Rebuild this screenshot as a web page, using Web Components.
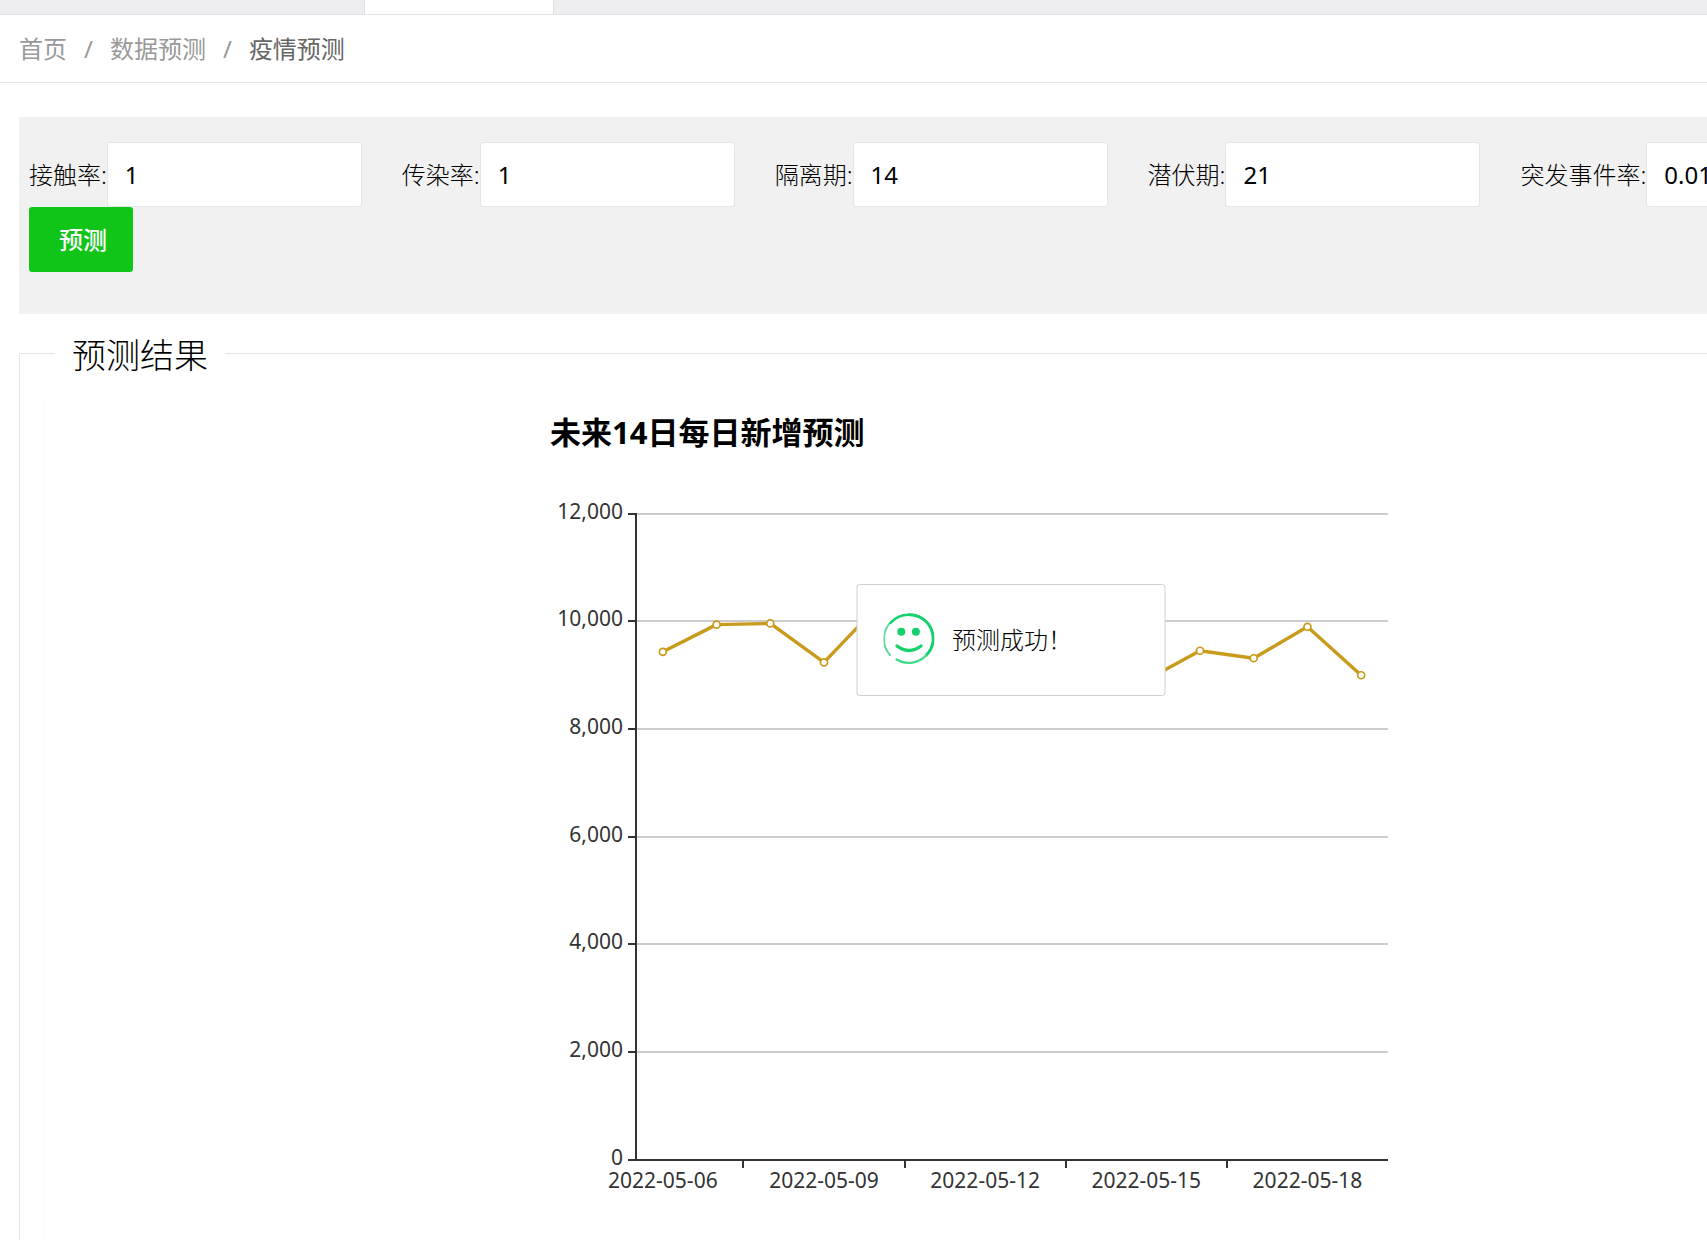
<!DOCTYPE html>
<html lang="zh-CN">
<head>
<meta charset="utf-8">
<title>疫情预测</title>
<style>
html,body{margin:0;padding:0;background:#fff;overflow:hidden}
body{font:24px/34px "Noto Sans","Noto Sans CJK SC",sans-serif;color:#000}
</style>
</head>
<body>
<forecast-page></forecast-page>
<script>
const define=(name,html,setup)=>{
  const t=document.createElement('template');t.innerHTML=html;
  customElements.define(name,class extends HTMLElement{
    connectedCallback(){
      if(this.shadowRoot)return;
      const root=this.attachShadow({mode:'open'});
      root.append(t.content.cloneNode(true));
      if(setup)setup(this,root);
    }
  });
};

define('tab-strip',`
<style>
:host{display:flex;height:14px;background:#eeeef0;border-bottom:1px solid #e2e2e4;padding-left:364px}
.tab{width:188px;background:#fff;border:solid #e2e2e4;border-width:0 1px}
</style><div class="tab"></div>`);

define('bread-crumb',`
<style>
:host{display:block;border-bottom:1px solid #e6e6e6;padding:17px 19px 16px}
nav{display:flex;gap:17px;color:#999}
a{color:inherit;text-decoration:none}
.now{color:#666}
</style>
<nav><a href="#home">首页</a><span>/</span><a href="#data">数据预测</a><span>/</span><a class="now" href="#forecast">疫情预测</a></nav>`);

define('form-field',`
<style>
:host{display:flex;align-items:center}
label{white-space:nowrap;font-weight:300}
input{box-sizing:border-box;width:255px;height:65px;padding:0 17px;border:1px solid #e6e6e6;border-radius:3px;background:#fff;color:#000;font:inherit;outline:0}
</style><label for="v"></label><input id="v" type="text">`,(el,root)=>{
  root.querySelector('label').textContent=el.getAttribute('label')+':';
  root.querySelector('input').value=el.getAttribute('value');
});

define('action-button',`
<style>
:host{display:block}
button{display:block;height:65px;padding:0 26px 0 30px;border:0;border-radius:3px;background:#10c418;color:#fff;font:inherit;font-weight:500}
</style><button type="button"><slot></slot></button>`);

define('query-panel',`
<style>
:host{display:flex;flex-wrap:wrap;column-gap:40px;background:#f1f1f1;padding:25px 10px 42px}
</style><slot></slot>`);

define('result-box',`
<style>
:host{display:block}
fieldset{margin:0;border:1px solid #e6e6e6;border-bottom:0;padding:0 25px;min-width:0}
legend{margin-left:10px;padding:4px 17px 0;font-size:34px;line-height:46px;font-weight:300}
.card{margin-top:17px;padding:17px 0;box-shadow:0 1px 2px rgba(0,0,0,.05);display:flex;justify-content:center}
</style>
<fieldset><legend>预测结果</legend><div class="card"><slot></slot></div></fieldset>`);

define('trend-chart',`
<style>
:host{display:block}
svg{display:block;overflow:visible}
.title{font-size:31px;font-weight:700;fill:#000}
.lab{font-size:21px;fill:#333}
.grid{stroke:#ccc;stroke-width:2}
.axis{stroke:#333;stroke-width:2}
.line{fill:none;stroke:#c99b1c;stroke-width:3.4;stroke-linejoin:bevel}
.dot{fill:#fff;stroke:#c99b1c;stroke-width:1.7}
</style><svg width="940" height="850" viewBox="0 0 940 850" role="img"></svg>`,(el,root)=>{
  const svg=root.querySelector('svg');
  const L=95,R=847,T=102,B=748,max=12000;
  const data=[9440,9945,9967,9243,10290,9800,9500,9200,8700,8915,9460,9320,9905,9005];
  const y=v=>B-(B-T)*v/max, band=(R-L)/data.length, x=i=>L+band*(i+.5);
  let s='<text class="title" x="9" y="32">未来14日每日新增预测</text>';
  for(let v=0;v<=max;v+=2000){
    const gy=Math.floor(y(v));
    if(v)s+=`<line class="grid" x1="${L}" x2="${R}" y1="${gy}" y2="${gy}"/>`;
    s+=`<line class="axis" x1="87" x2="${L}" y1="${gy}" y2="${gy}"/>`;
    s+=`<text class="lab" text-anchor="end" x="82" y="${gy+5}">${v.toLocaleString('en-US')}</text>`;
  }
  s+=`<line class="axis" x1="${L}" x2="${L}" y1="${T-1}" y2="${B}"/><line class="axis" x1="${L}" x2="${R}" y1="${B}" y2="${B}"/>`;
  for(let i=2;i<14;i+=3){const tx=Math.round(L+band*i);s+=`<line class="axis" x1="${tx}" x2="${tx}" y1="${B}" y2="${B+8}"/>`;}
  for(let i=0;i<14;i+=3)s+=`<text class="lab" text-anchor="middle" x="${x(i)}" y="${B+28}">2022-05-${String(6+i).padStart(2,'0')}</text>`;
  s+=`<polyline class="line" points="${data.map((v,i)=>x(i)+','+y(v)).join(' ')}"/>`;
  s+=data.map((v,i)=>`<circle class="dot" cx="${x(i)}" cy="${y(v)}" r="3.5"/>`).join('');
  svg.innerHTML=s;
});

define('toast-message',`
<style>
:host{position:absolute;top:584px;left:50%;transform:translateX(-50%);box-sizing:border-box;width:309px;height:112px;display:flex;align-items:center;gap:17px;padding:0 26px;background:#fff;border:1px solid #d0d0d0;border-radius:3px;font-weight:300}
svg{display:block;flex:none;margin-bottom:3px}
</style>
<svg width="51" height="51" viewBox="0 0 51 51" fill="none" stroke="#16d06c" stroke-linecap="round">
<path d="M6.5 42A24.2 24.2 0 0 1 9 7.5" stroke="#5bdf98" stroke-width="2"/>
<path d="M7 10A24 24 0 0 1 25.5 1.8" stroke-width="2.4"/>
<path d="M25.5 1.8A23.7 23.7 0 0 1 43 42" stroke-width="3"/>
<path d="M43 42A24 24 0 0 1 13 46.5" stroke="#3fd987" stroke-width="2.2"/>
<circle cx="17.8" cy="18.8" r="4" fill="#16d06c" stroke="none"/><circle cx="32.4" cy="18.8" r="4" fill="#16d06c" stroke="none"/>
<path d="M13.5 33Q25.5 42 37.5 33" stroke-width="3.4"/>
</svg><span><slot></slot></span>`);

define('forecast-page',`
<style>
:host{display:block;position:relative;width:118.5%}
main{display:flex;flex-direction:column;gap:14px;padding:34px 19px 0}
</style>
<tab-strip></tab-strip>
<bread-crumb></bread-crumb>
<main>
<query-panel>
<form-field label="接触率" value="1"></form-field>
<form-field label="传染率" value="1"></form-field>
<form-field label="隔离期" value="14"></form-field>
<form-field label="潜伏期" value="21"></form-field>
<form-field label="突发事件率" value="0.01"></form-field>
<action-button>预测</action-button>
</query-panel>
<result-box><trend-chart></trend-chart></result-box>
</main>
<toast-message>预测成功！</toast-message>`);
</script>
</body>
</html>
